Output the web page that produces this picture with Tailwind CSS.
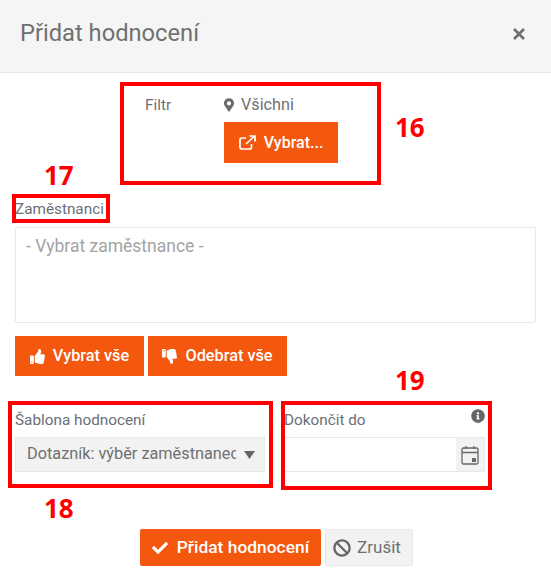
<!DOCTYPE html>
<html lang="cs">
<head>
  <meta charset="UTF-8" />
  <title>Přidat hodnocení</title>
  <script src="https://cdn.jsdelivr.net/npm/@tailwindcss/browser@4"></script>
</head>
<body class="bg-white font-['Roboto',sans-serif] text-[15.3px] text-[#6b6f76]">
  <div class="relative w-[551px] h-[583px] overflow-hidden">
    <!-- header -->
    <div class="h-[73px] bg-[#f5f5f5] border-b border-[#e8e8e8] flex items-center justify-between pl-[20px] pr-[25px] pb-[5px]">
      <h1 class="text-[23.7px] text-[#707070] font-normal">Přidat hodnocení</h1>
      <svg class="w-[14px] h-[14px] text-[#707070]" viewBox="0 0 14 14" fill="none" stroke="currentColor" stroke-width="2.8"><path d="M2 2l10 10M12 2l-10 10"/></svg>
    </div>

    <!-- filter -->
    <div class="flex pl-[145px] pt-[22px]">
      <div class="w-[79px] leading-[20px]">Filtr</div>
      <div>
        <div class="flex items-center gap-[7px] h-[20px] text-[16.2px] text-[#707070]">
          <svg class="w-[10px] h-[14px] fill-[#6b6b6b]" viewBox="0 0 384 512"><path d="M172.268 501.67C26.97 291.031 0 269.413 0 192 0 85.961 85.961 0 192 0s192 85.961 192 192c0 77.413-26.97 99.031-172.268 309.67-9.535 13.774-29.93 13.773-39.464 0zM192 272c44.183 0 80-35.817 80-80s-35.817-80-80-80-80 35.817-80 80 35.817 80 80 80z"/></svg>
          <span>Všichni</span>
        </div>
        <button class="mt-[7px] w-[114px] h-[41px] bg-[#f4570e] text-white text-[16px] font-medium flex items-center justify-center gap-[8px]">
          <svg class="w-[17px] h-[15px]" viewBox="0 0 17 15" fill="none" stroke="white" stroke-width="1.7"><path d="M12.5 9v3a2 2 0 0 1-2 2H3a2 2 0 0 1-2-2V5a2 2 0 0 1 2-2h4"/><path d="M7 9l8-7.5M10.500 1h5.500v5.500" /></svg>
          <span>Vybrat...</span>
        </button>
      </div>
    </div>

    <!-- employees -->
    <div class="px-[15px] pt-[36px]">
      <label class="block leading-[20px] h-[28px]">Zaměstnanci</label>
      <div class="h-[96px] border border-[#e8e8e8] rounded-[2px] px-[10px] py-[7px] text-[17.500px] leading-[22px] text-[#a3a3a3]">- Vybrat zaměstnance -</div>
      <div class="flex gap-[4px] mt-[13px]">
        <button class="w-[129px] h-[40px] bg-[#f4570e] text-white text-[16.300px] font-medium flex items-center justify-center gap-[8px]">
          <svg class="w-[15px] h-[15px] fill-white" viewBox="0 0 512 512"><path d="M104 224H24c-13.255 0-24 10.745-24 24v240c0 13.255 10.745 24 24 24h80c13.255 0 24-10.745 24-24V248c0-13.255-10.745-24-24-24zM64 472c-13.255 0-24-10.745-24-24s10.745-24 24-24 24 10.745 24 24-10.745 24-24 24zM384 81.452c0 42.416-25.97 66.208-33.277 94.548h101.723c33.397 0 59.397 27.746 59.553 58.098.084 17.938-7.546 37.249-19.439 49.197l-.11.11c9.836 23.337 8.237 56.037-9.308 79.469 8.681 25.895-.069 57.704-16.382 74.757 4.298 17.598 2.244 32.575-6.148 44.632C440.202 511.587 389.616 512 346.839 512l-2.845-.001c-48.287-.017-87.806-17.598-119.56-31.725-15.957-7.099-36.821-15.887-52.651-16.178-6.54-.12-11.783-5.457-11.783-11.998v-213.77c0-3.2 1.282-6.271 3.558-8.521 39.614-39.144 56.648-80.587 89.117-113.111 14.804-14.832 20.188-37.236 25.393-58.902C282.515 39.293 291.817 0 312 0c24 0 72 8 72 81.452z"/></svg>
          <span>Vybrat vše</span>
        </button>
        <button class="w-[139px] h-[40px] bg-[#f4570e] text-white text-[16.300px] font-medium flex items-center justify-center gap-[8px]">
          <svg class="w-[15px] h-[15px] fill-white -scale-y-100" viewBox="0 0 512 512"><path d="M104 224H24c-13.255 0-24 10.745-24 24v240c0 13.255 10.745 24 24 24h80c13.255 0 24-10.745 24-24V248c0-13.255-10.745-24-24-24zM64 472c-13.255 0-24-10.745-24-24s10.745-24 24-24 24 10.745 24 24-10.745 24-24 24zM384 81.452c0 42.416-25.97 66.208-33.277 94.548h101.723c33.397 0 59.397 27.746 59.553 58.098.084 17.938-7.546 37.249-19.439 49.197l-.11.11c9.836 23.337 8.237 56.037-9.308 79.469 8.681 25.895-.069 57.704-16.382 74.757 4.298 17.598 2.244 32.575-6.148 44.632C440.202 511.587 389.616 512 346.839 512l-2.845-.001c-48.287-.017-87.806-17.598-119.56-31.725-15.957-7.099-36.821-15.887-52.651-16.178-6.54-.12-11.783-5.457-11.783-11.998v-213.77c0-3.2 1.282-6.271 3.558-8.521 39.614-39.144 56.648-80.587 89.117-113.111 14.804-14.832 20.188-37.236 25.393-58.902C282.515 39.293 291.817 0 312 0c24 0 72 8 72 81.452z"/></svg>
          <span>Odebrat vše</span>
        </button>
      </div>
    </div>

    <!-- template + due date -->
    <div class="flex pl-[15px] pt-[35px]">
      <div class="w-[250px]">
        <label class="block leading-[20px] h-[27px] -mt-[1px]">Šablona hodnocení</label>
        <div class="h-[35px] bg-[#f2f2f2] border border-[#e8e8e8] flex items-center pl-[11px] pr-[8px] text-[16.300px] text-[#707070]">
          <span class="w-[209px] overflow-hidden whitespace-nowrap">Dotazník: výběr zaměstnanec</span>
          <svg class="ml-[8px] w-[11px] h-[8px] fill-[#666666]" viewBox="0 0 11 8"><path d="M0 0h11L5.500 8z"/></svg>
        </div>
      </div>
      <div class="w-[200px] ml-[20px] relative">
        <label class="block leading-[20px] h-[27px] -mt-[1px] -ml-[1px]">Dokončit do</label>
        <svg class="absolute right-0 top-[-2px] w-[14px] h-[14px] fill-[#666666]" viewBox="0 0 512 512"><path d="M256 8C119.043 8 8 119.083 8 256c0 136.997 111.043 248 248 248s248-111.003 248-248C504 119.083 392.957 8 256 8zm0 110c23.196 0 42 18.804 42 42s-18.804 42-42 42-42-18.804-42-42 18.804-42 42-42zm56 254c0 6.627-5.373 12-12 12h-88c-6.627 0-12-5.373-12-12v-24c0-6.627 5.373-12 12-12h12v-64h-12c-6.627 0-12-5.373-12-12v-24c0-6.627 5.373-12 12-12h64c6.627 0 12 5.373 12 12v100h12c6.627 0 12 5.373 12 12v24z"/></svg>
        <div class="h-[35px] border-y border-r border-[#e8e8e8] flex justify-end">
          <div class="w-[28px] bg-[#f2f2f2] flex items-center justify-center">
            <svg class="w-[18px] h-[20px]" viewBox="0 0 18 20" fill="none" stroke="#666666" stroke-width="1.3"><rect x="1" y="3" width="16" height="16" rx="1.5"/><path d="M1 7.500h16M5 1v3M13 1v3"/><rect x="11" y="13" width="4" height="4" fill="#666666" stroke="none"/></svg>
          </div>
        </div>
      </div>
    </div>

    <!-- footer buttons -->
    <div class="flex justify-center gap-[4px] pt-[57px] pl-[2px]">
      <button class="w-[181px] h-[37px] bg-[#f4570e] rounded-[2px] text-white text-[17.400px] font-medium flex items-center justify-center gap-[9px]">
        <svg class="w-[16px] h-[16px] fill-white" viewBox="0 0 512 512"><path d="M173.898 439.404l-166.4-166.4c-9.997-9.997-9.997-26.206 0-36.204l36.203-36.204c9.997-9.998 26.207-9.998 36.204 0L192 312.69 432.095 72.596c9.997-9.997 26.207-9.997 36.204 0l36.203 36.204c9.997 9.997 9.997 26.206 0 36.204l-294.4 294.401c-9.998 9.997-26.207 9.997-36.204-.001z"/></svg>
        <span>Přidat hodnocení</span>
      </button>
      <button class="w-[88px] h-[37px] bg-[#f2f2f2] border border-[#e8e8e8] rounded-[2px] text-[#707070] text-[17px] flex items-center justify-center gap-[6px] pr-[4px]">
        <svg class="w-[18px] h-[18px] fill-[#666666]" viewBox="0 0 512 512"><path d="M256 8C119.034 8 8 119.033 8 256s111.034 248 248 248 248-111.034 248-248S392.967 8 256 8zm130.108 117.892c65.448 65.448 70 165.481 20.677 235.637L150.47 105.216c70.204-49.356 170.226-44.735 235.638 20.676zM125.892 386.108c-65.448-65.448-70-165.481-20.677-235.637L361.53 406.784c-70.203 49.356-170.226 44.736-235.638-20.676z"/></svg>
        <span>Zrušit</span>
      </button>
    </div>

    <!-- red annotations drawn over the dialog -->
    <div class="absolute left-[120px] top-[82px] w-[261px] h-[103px] border-[4px] border-[#ff0000]"></div>
    <div class="absolute left-[12px] top-[194px] w-[98px] h-[29px] border-[4px] border-[#ff0000]"></div>
    <div class="absolute left-[8px] top-[401px] w-[265px] h-[87px] border-[4px] border-[#ff0000]"></div>
    <div class="absolute left-[281px] top-[401px] w-[211px] h-[89px] border-[4px] border-[#ff0000]"></div>
    <span class="absolute left-[395px] top-[110px] text-[26px] leading-[34px] font-bold font-['Open_Sans',sans-serif] text-[#ff0000]">16</span>
    <span class="absolute left-[44px] top-[158px] text-[26px] leading-[34px] font-bold font-['Open_Sans',sans-serif] text-[#ff0000]">17</span>
    <span class="absolute left-[44px] top-[491px] text-[26px] leading-[34px] font-bold font-['Open_Sans',sans-serif] text-[#ff0000]">18</span>
    <span class="absolute left-[395px] top-[363px] text-[26px] leading-[34px] font-bold font-['Open_Sans',sans-serif] text-[#ff0000]">19</span>
  </div>
</body>
</html>
